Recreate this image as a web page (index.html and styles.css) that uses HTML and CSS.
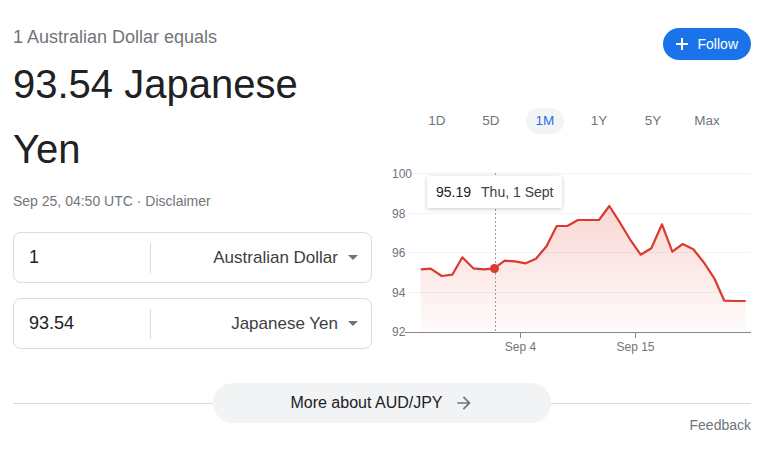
FILE: index.html
```html
<!DOCTYPE html>
<html lang="en">
<head>
<meta charset="utf-8">
<title>AUD to JPY</title>
<link rel="stylesheet" href="styles.css">
</head>
<body>
<div class="card">
  <div class="top">
    <div class="left">
      <div class="equals">1 Australian Dollar equals</div>
      <div class="result">93.54 Japanese Yen</div>
      <div class="meta">Sep 25, 04:50 UTC · <span class="disc">Disclaimer</span></div>
      <div class="conv">
        <div class="val">1</div>
        <div class="sep"></div>
        <div class="sel"><span>Australian Dollar</span><i class="tri"></i></div>
      </div>
      <div class="conv">
        <div class="val">93.54</div>
        <div class="sep"></div>
        <div class="sel"><span>Japanese Yen</span><i class="tri"></i></div>
      </div>
    </div>
    <div class="right">
      <div class="follow-row">
        <button class="follow"><svg width="12" height="12" viewBox="0 0 12 12"><path d="M6 0V12M0 6H12" stroke="#fff" stroke-width="2"/></svg><span>Follow</span></button>
      </div>
      <div class="tabs">
        <span class="tab">1D</span>
        <span class="tab">5D</span>
        <span class="tab active">1M</span>
        <span class="tab">1Y</span>
        <span class="tab">5Y</span>
        <span class="tab">Max</span>
      </div>
      <div class="chart">
        <svg width="371" height="200" viewBox="0 0 371 200">
          <defs>
            <linearGradient id="fillg" x1="0" y1="46" x2="0" y2="172" gradientUnits="userSpaceOnUse">
              <stop offset="0" stop-color="#e8483b" stop-opacity="0.22"/>
              <stop offset="1" stop-color="#e8483b" stop-opacity="0.02"/>
            </linearGradient>
          </defs>
          <g stroke="#f1f3f4" stroke-width="1">
            <line x1="32" y1="13.5" x2="370" y2="13.5"/>
            <line x1="28" y1="53.5" x2="370" y2="53.5"/>
            <line x1="28" y1="92.5" x2="370" y2="92.5"/>
            <line x1="28" y1="132.5" x2="370" y2="132.5"/>
          </g>
          <g class="ylab">
            <text x="12" y="17.5">100</text>
            <text x="12" y="57.5">98</text>
            <text x="12" y="97">96</text>
            <text x="12" y="136.5">94</text>
            <text x="12" y="176">92</text>
          </g>
          <polygon fill="url(#fillg)" points="40.7,109.3 50.7,108.7 61.7,116 72.3,114.7 82.3,97.3 93.3,108.3 104.3,109.3 114.3,108.3 124.7,100.7 135,101.3 145.7,103.3 156,98.7 166.7,86 176.7,66 187.3,66 198,60 209,60 219,60 229.3,46 240,62.7 250,79.3 260.7,94.7 271.3,88.3 282,64.3 292.3,91.7 302.7,84 313.3,89.3 323.3,101.7 334.3,118.3 344.3,140.7 355,141 365.7,141 365.7,172 40.7,172"/>
          <line x1="115.5" y1="13" x2="115.5" y2="172" stroke="#9aa0a6" stroke-width="1" stroke-dasharray="2,2"/>
          <polyline fill="none" stroke="#db3b2f" stroke-width="2.2" stroke-linejoin="round" points="40.7,109.3 50.7,108.7 61.7,116 72.3,114.7 82.3,97.3 93.3,108.3 104.3,109.3 114.3,108.3 124.7,100.7 135,101.3 145.7,103.3 156,98.7 166.7,86 176.7,66 187.3,66 198,60 209,60 219,60 229.3,46 240,62.7 250,79.3 260.7,94.7 271.3,88.3 282,64.3 292.3,91.7 302.7,84 313.3,89.3 323.3,101.7 334.3,118.3 344.3,140.7 355,141 365.7,141"/>
          <line x1="25" y1="172.5" x2="371" y2="172.5" stroke="#80868b" stroke-width="1"/>
          <line x1="140.5" y1="172" x2="140.5" y2="178" stroke="#80868b" stroke-width="1"/>
          <line x1="255.5" y1="172" x2="255.5" y2="178" stroke="#80868b" stroke-width="1"/>
          <g class="xlab">
            <text x="140.5" y="191">Sep 4</text>
            <text x="255.5" y="191">Sep 15</text>
          </g>
          <circle cx="114.5" cy="108.5" r="4.5" fill="#db3b2f"/>
        </svg>
        <div class="tooltip"><span class="tv">95.19</span><span class="td">Thu, 1 Sept</span></div>
      </div>
    </div>
  </div>
  <div class="more">
    <div class="rule"></div>
    <button class="more-btn"><span>More about AUD/JPY</span><svg width="20" height="20" viewBox="0 0 24 24"><path d="M12 4l-1.41 1.41L16.17 11H4v2h12.17l-5.58 5.59L12 20l8-8z" fill="#70757a"/></svg></button>
    <div class="rule"></div>
  </div>
  <div class="feedback">Feedback</div>
</div>
</body>
</html>
```

FILE: styles.css
```css
* { box-sizing: border-box; }
html, body { margin: 0; padding: 0; background: #fff; }
body { font-family: "Liberation Sans", Arial, sans-serif; color: #202124; }

.card { width: 781px; padding: 25px 30px 0 13px; }

.top { display: grid; grid-template-columns: 359px 371px; column-gap: 8px; align-items: start; }

.equals { font-size: 18px; line-height: 24px; color: #70757a; }
.result { margin-top: 3px; font-size: 40px; line-height: 65px; color: #202124; }
.meta { margin-top: 9px; font-size: 14px; line-height: 20px; color: #70757a; }

.conv {
  display: flex; align-items: center; height: 51px;
  border: 1px solid #dadce0; border-radius: 8px;
}
.conv:first-of-type { margin-top: 21px; }
.meta + .conv { margin-top: 21px; }
.conv + .conv { margin-top: 15px; }
.val { width: 136px; padding-left: 15px; font-size: 18px; color: #202124; }
.sep { width: 1px; height: 30px; background: #dadce0; }
.sel {
  flex: 1; display: flex; justify-content: flex-end; align-items: center;
  padding-right: 13px; font-size: 17px; color: #3c4043;
}
.tri {
  display: block; width: 0; height: 0; margin-left: 10px;
  border-left: 5px solid transparent; border-right: 5px solid transparent;
  border-top: 5px solid #70757a;
}

.follow-row { display: flex; justify-content: flex-end; margin-top: 3px; }
.follow {
  display: flex; align-items: center; gap: 10px;
  height: 32px; padding: 0 13px; border: 0; border-radius: 16px;
  background: #1a73e8; color: #fff; font-family: inherit; font-size: 14px;
}
.follow svg { display: block; }

.tabs { display: flex; gap: 16px; margin-top: 48px; padding-left: 38px; }
.tab {
  width: 38px; height: 26px; line-height: 26px; text-align: center;
  font-size: 13.5px; color: #70757a; border-radius: 13px;
}
.tab.active { background: #f3f4f6; color: #1a73e8; }

.chart { position: relative; margin-top: 26px; height: 200px; }
.chart svg { display: block; }
.ylab text { font-family: "Liberation Sans", Arial, sans-serif; font-size: 12px; fill: #70757a; }
.xlab text { font-family: "Liberation Sans", Arial, sans-serif; font-size: 12px; fill: #70757a; text-anchor: middle; }

.tooltip {
  position: absolute; left: 47px; top: 16px; height: 32px;
  padding: 0 9px; background: #fff; border-radius: 2px;
  box-shadow: 0 1px 4px rgba(0,0,0,0.22);
  font-size: 14px; line-height: 32px; white-space: nowrap;
}
.tv { color: #202124; }
.td { margin-left: 10px; color: #3c4043; }

.more { display: flex; align-items: center; margin-top: 23px; height: 40px; }
.rule { flex: 1; height: 1px; background: #dadce0; }
.more-btn {
  width: 338px; height: 40px; border: 0; border-radius: 20px; background: #f1f3f4;
  display: flex; align-items: center; justify-content: center; gap: 11px;
  font-family: inherit; font-size: 16px; color: #202124;
}
.more-btn svg { display: block; }

.feedback { margin-top: -6px; text-align: right; font-size: 14px; line-height: 16px; color: #70757a; }
```
